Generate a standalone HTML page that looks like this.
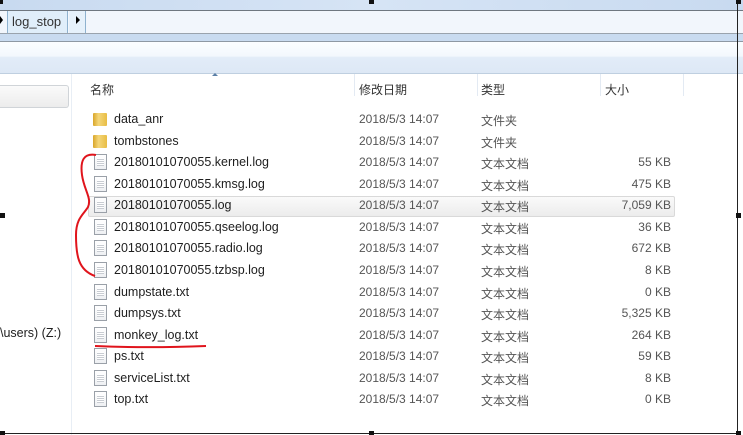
<!DOCTYPE html>
<html><head><meta charset="utf-8"><style>
*{margin:0;padding:0;box-sizing:border-box}
body{width:743px;height:435px;overflow:hidden;background:#fff;position:relative;font-family:"Liberation Sans","Noto Sans CJK SC",sans-serif;font-size:12.5px;color:#1e1e1e}
.a{position:absolute}
.row{position:absolute;left:0;width:743px;height:21px}
.row span{position:absolute;top:4px;white-space:nowrap}
.n{left:114px}.d{left:359px;color:#555;font-size:12px}.t{left:481px;color:#555;font-size:12px}.s{right:72px;color:#555;font-size:12px}
.doc{position:absolute;left:94px;top:3px;width:13px;height:16px;border:1px solid #9aa0a8;background:linear-gradient(#fff,#eef0f3)}
.doc:after{content:"";position:absolute;left:2px;top:3px;width:7px;height:8px;background:repeating-linear-gradient(#fff 0 1px,#c8ccd2 1px 2px)}
.fold{position:absolute;left:93px;top:5px;width:14px;height:13px;background:linear-gradient(90deg,#d9a62a,#f4d679 40%,#e8bd45);border-radius:1px}
.h{position:absolute;top:81px;color:#333;font-size:12px}
.sep{position:absolute;top:74px;width:1px;height:22px;background:#e3eaf3}
.sq{position:absolute;background:#111;width:5px;height:5px}
</style></head><body>
<div class="a" style="left:0;top:0;width:743px;height:11px;background:linear-gradient(90deg,#c8daf0,#d6e4f5,#c8daf0)"></div>
<div class="a" style="left:0;top:10px;width:743px;height:24px;background:#f2f6fc;border-top:1px solid #6f7780;border-bottom:1px solid #9aa3ad"></div>
<div class="a" style="top:11px;height:22px;background:#e0eefa;left:7px;width:61px;border-left:1px solid #8fb2cf;border-right:1px solid #8fb2cf"></div>
<div class="a" style="left:12px;top:14px;font-size:13px;color:#333">log_stop</div>
<div class="a" style="left:69px;top:11px;width:17px;height:22px;background:#e6f1fb;border-right:1px solid #8fb2cf"></div>
<div class="a" style="left:0;top:16px;width:0;height:0;border-top:4px solid transparent;border-bottom:4px solid transparent;border-left:3px solid #000"></div>
<div class="a" style="left:76px;top:16px;width:0;height:0;border-top:4px solid transparent;border-bottom:4px solid transparent;border-left:4px solid #000"></div>
<div class="a" style="left:0;top:34px;width:743px;height:8px;background:#c9dbf0;border-bottom:1px solid #8e98a3"></div>
<div class="a" style="left:0;top:42px;width:743px;height:32px;background:linear-gradient(#fbfdff 0,#f3f8fd 45%,#e2ecf8 50%,#dde8f5 100%);border-bottom:1px solid #bfcfe0"></div>
<div class="a" style="left:0;top:74px;width:72px;height:361px;border-right:1px solid #e8eef5"></div>
<div class="a" style="left:0;top:85px;width:69px;height:23px;border:1px solid #d0d4d8;border-left:none;border-radius:0 3px 3px 0;background:linear-gradient(#fafafa,#ececec)"></div>
<div class="a" style="left:0;top:326px;font-size:12.5px">\users) (Z:)</div>
<div class="h" style="left:90px">名称</div>
<div class="h" style="left:359px">修改日期</div>
<div class="h" style="left:481px">类型</div>
<div class="h" style="left:605px">大小</div>
<div class="sep" style="left:354px"></div><div class="sep" style="left:477px"></div><div class="sep" style="left:600px"></div><div class="sep" style="left:683px"></div>
<div class="a" style="left:212px;top:73px;width:0;height:0;border-left:3px solid transparent;border-right:3px solid transparent;border-bottom:3px solid #5b7fa6"></div>
<div class="a" style="left:88px;top:196px;width:587px;height:21px;border:1px solid #d9d9d9;border-radius:2px;background:linear-gradient(#fafafa,#ececec)"></div>
<div class="row" style="top:108px"><i class="fold"></i><span class="n">data_anr</span><span class="d">2018/5/3 14:07</span><span class="t">文件夹</span></div>
<div class="row" style="top:130px"><i class="fold"></i><span class="n">tombstones</span><span class="d">2018/5/3 14:07</span><span class="t">文件夹</span></div>
<div class="row" style="top:151px"><i class="doc"></i><span class="n">20180101070055.kernel.log</span><span class="d">2018/5/3 14:07</span><span class="t">文本文档</span><span class="s">55 KB</span></div>
<div class="row" style="top:173px"><i class="doc"></i><span class="n">20180101070055.kmsg.log</span><span class="d">2018/5/3 14:07</span><span class="t">文本文档</span><span class="s">475 KB</span></div>
<div class="row" style="top:194px"><i class="doc"></i><span class="n">20180101070055.log</span><span class="d">2018/5/3 14:07</span><span class="t">文本文档</span><span class="s">7,059 KB</span></div>
<div class="row" style="top:216px"><i class="doc"></i><span class="n">20180101070055.qseelog.log</span><span class="d">2018/5/3 14:07</span><span class="t">文本文档</span><span class="s">36 KB</span></div>
<div class="row" style="top:237px"><i class="doc"></i><span class="n">20180101070055.radio.log</span><span class="d">2018/5/3 14:07</span><span class="t">文本文档</span><span class="s">672 KB</span></div>
<div class="row" style="top:259px"><i class="doc"></i><span class="n">20180101070055.tzbsp.log</span><span class="d">2018/5/3 14:07</span><span class="t">文本文档</span><span class="s">8 KB</span></div>
<div class="row" style="top:281px"><i class="doc"></i><span class="n">dumpstate.txt</span><span class="d">2018/5/3 14:07</span><span class="t">文本文档</span><span class="s">0 KB</span></div>
<div class="row" style="top:302px"><i class="doc"></i><span class="n">dumpsys.txt</span><span class="d">2018/5/3 14:07</span><span class="t">文本文档</span><span class="s">5,325 KB</span></div>
<div class="row" style="top:324px"><i class="doc"></i><span class="n">monkey_log.txt</span><span class="d">2018/5/3 14:07</span><span class="t">文本文档</span><span class="s">264 KB</span></div>
<div class="row" style="top:345px"><i class="doc"></i><span class="n">ps.txt</span><span class="d">2018/5/3 14:07</span><span class="t">文本文档</span><span class="s">59 KB</span></div>
<div class="row" style="top:367px"><i class="doc"></i><span class="n">serviceList.txt</span><span class="d">2018/5/3 14:07</span><span class="t">文本文档</span><span class="s">8 KB</span></div>
<div class="row" style="top:388px"><i class="doc"></i><span class="n">top.txt</span><span class="d">2018/5/3 14:07</span><span class="t">文本文档</span><span class="s">0 KB</span></div>
<svg class="a" style="left:0;top:0" width="743" height="435">
<path d="M96 155 C84 153 80 160 82 175 C84 190 92 198 88 207 C84 214 76 218 76 235 C76 255 78 270 95 276" fill="none" stroke="#e0141c" stroke-width="2"/>
<path d="M95 346 C140 348 180 347 206 346" fill="none" stroke="#e0141c" stroke-width="2"/>
<line x1="737.5" y1="0" x2="737.5" y2="434" stroke="#222" stroke-width="1"/>
<line x1="0" y1="433.5" x2="738" y2="433.5" stroke="#222" stroke-width="1"/>
</svg>
<div class="sq" style="left:0;top:0;height:4px;width:3px"></div>
<div class="sq" style="left:369px;top:0;height:4px"></div>
<div class="sq" style="left:736px;top:0;height:4px"></div>
<div class="sq" style="left:0;top:213px"></div>
<div class="sq" style="left:736px;top:213px"></div>
<div class="sq" style="left:0;top:431px;height:4px"></div>
<div class="sq" style="left:369px;top:431px;height:4px"></div>
<div class="sq" style="left:736px;top:431px;height:4px"></div>
</body></html>
